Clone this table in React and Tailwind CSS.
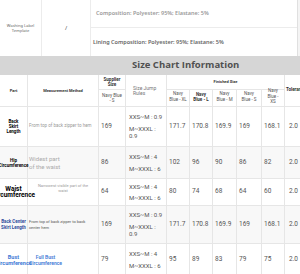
import React from 'react'

const GRID = 'grid grid-cols-[28px_71px_27px_41px_23px_23px_24px_25px_23px_20px]'

const rows = [
  {
    h: 'h-[40px]',
    bg: 'bg-white',
    part: <span className="text-[4.5px] font-bold leading-[5px] text-black">Back<br />Skirt<br />Length</span>,
    method: (
      <div className="flex h-full items-center pl-[1px] text-[4.5px] text-[#999]">From top of back zipper to hem</div>
    ),
    supplier: '169',
    jump: [['XXS~M : 0.9'], ['M~XXXL :', '0.9']],
    sizes: ['171.7', '170.8', '169.9', '169', '168.1'],
    tol: '2.0',
  },
  {
    h: 'h-[32px]',
    bg: 'bg-[#f8f8f8]',
    part: <span className="whitespace-nowrap text-[4.5px] font-bold leading-[5px] text-black">Hip<br />Circumference</span>,
    method: (
      <div className="flex h-full flex-col justify-center pl-[1px] text-[6px] leading-[7.5px] text-[#aaa]">
        <span>Widest part</span>
        <span>of the waist</span>
      </div>
    ),
    supplier: '86',
    jump: [['XXS~M : 4'], ['M~XXXL : 6']],
    sizes: ['102', '96', '90', '86', '82'],
    tol: '2.0',
  },
  {
    h: 'h-[27px]',
    bg: 'bg-white',
    part: <span className="whitespace-nowrap text-[6.5px] font-bold leading-[6.5px] text-black">Waist<br />Circumference</span>,
    method: (
      <div className="flex h-full flex-col items-center justify-start pt-[4px] text-center text-[4px] leading-[5px] text-[#999]">
        <span>Narrowest visible part of the</span>
        <span>waist</span>
      </div>
    ),
    supplier: '64',
    jump: [['XXS~M : 4'], ['M~XXXL : 6']],
    sizes: ['80', '74', '68', '64', '60'],
    tol: '2.0',
  },
  {
    h: 'h-[38px]',
    bg: 'bg-[#f8f8f8]',
    part: <span className="whitespace-nowrap text-[4.5px] font-bold leading-[6px] text-[#2e4b9b]">Back Center<br />Skirt Length</span>,
    method: (
      <div className="flex h-full flex-col justify-center pl-[1px] text-[4px] leading-[6px] text-[#555]">
        <span>From top of back zipper to back</span>
        <span>center hem</span>
      </div>
    ),
    supplier: '169',
    jump: [['XXS~M : 0.9'], ['M~XXXL :', '0.9']],
    sizes: ['171.7', '170.8', '169.9', '169', '168.1'],
    tol: '2.0',
  },
  {
    h: 'h-[32px]',
    bg: 'bg-white',
    part: <span className="whitespace-nowrap text-[5.5px] font-bold leading-[6px] text-[#3f7ad6]">Bust<br />Circumference</span>,
    method: (
      <div className="flex h-full items-center pl-[1px]">
        <div className="text-center text-[5px] font-semibold leading-[6px] text-[#3f7ad6]">
          Full Bust<br />Circumference
        </div>
      </div>
    ),
    supplier: '79',
    jump: [['XXS~M : 4'], ['M~XXXL : 6']],
    sizes: ['95', '89', '83', '79', '75'],
    tol: '2.0',
  },
]

const cell = 'border-r border-b border-[#e6e6e6]'
const num = 'flex items-center pl-[2px] text-[6.5px] text-[#555]'

const SizeRow = ({ row }) => (
  <div className={`${GRID} ${row.h} ${row.bg} font-['Roboto',sans-serif]`}>
    <div className={`${cell} flex flex-col items-center justify-center text-center`}>{row.part}</div>
    <div className={cell}>{row.method}</div>
    <div className={`${cell} ${num}`}>{row.supplier}</div>
    <div className={`${cell} flex flex-col justify-center gap-[4px] pl-[3px] text-[6px] leading-[7.5px] text-[#555]`}>
      {row.jump.map((lines, i) => (
        <div key={i}>
          {lines.map((l) => (
            <div key={l}>{l}</div>
          ))}
        </div>
      ))}
    </div>
    {row.sizes.map((s, i) => (
      <div key={i} className={`${cell} ${num}`}>{s}</div>
    ))}
    <div className={`${cell} ${num} pl-[4px]`}>{row.tol}</div>
  </div>
)

const App = () => {
  return (
    <div className="h-[274px] w-[300px] overflow-hidden bg-[#f4f4f4] font-['Noto_Sans',sans-serif]">
      {/* 상단: 세탁 라벨 / 혼용률 */}
      <div className="flex h-[56px] w-[298px] border-r border-[#e0e0e0] bg-white">
        <div className="flex w-[42px] items-center justify-center border-r border-[#ececec] text-center text-[4px] leading-[5px] text-[#666]">
          Washing Label<br />Template
        </div>
        <div className="flex w-[49px] items-center justify-center border-r border-[#ececec] text-[6px] text-[#555]">/</div>
        <div className="flex flex-1 flex-col">
          <div className="flex h-[28px] items-center border-b border-[#ececec] pl-[5px] text-[5.5px] font-semibold text-[#999]">
            Composition: Polyester: 95%; Elastane: 5%
          </div>
          <div className="flex h-[28px] items-center pl-[2px] text-[5.5px] font-semibold text-[#666]">
            Lining Composition: Polyester: 95%; Elastane: 5%
          </div>
        </div>
      </div>

      {/* 타이틀 */}
      <div className="flex h-[19px] items-center bg-[#d6d6d6] pl-[132px] font-['Open_Sans',sans-serif] text-[9.5px] font-bold text-[#505050]">
        Size Chart Information
      </div>

      {/* 헤더 */}
      <div className={`${GRID} grid-rows-[15px_17px] bg-white font-['Roboto',sans-serif]`}>
        <div className={`${cell} row-span-2 flex items-center justify-center text-[4px] font-bold text-[#333]`}>Part</div>
        <div className={`${cell} row-span-2 flex items-center justify-center text-[4px] font-bold text-[#333]`}>Measurement Method</div>
        <div className={`${cell} flex items-center justify-center text-center text-[4.5px] font-bold leading-[5px] text-[#333]`}>
          Supplier<br />Size
        </div>
        <div className={`${cell} row-span-2 flex items-center pl-[7px] text-[5px] leading-[5px] text-[#777]`}>
          Size Jump<br />Rules
        </div>
        <div className={`${cell} col-span-5 flex items-center justify-center text-[4px] font-bold text-[#333]`}>Finished Size</div>
        <div className={`${cell} row-span-2 flex items-center pl-[1px] text-[4.5px] font-bold text-[#333]`}>Tolerance</div>
        <div className={`${cell} flex items-center justify-center text-center text-[4.5px] leading-[5px] text-[#555]`}>
          Navy Blue<br />- S
        </div>
        <div className={`${cell} flex items-end justify-center pb-[4px] text-center text-[4.5px] leading-[5.5px] text-[#555]`}>
          Navy<br />Blue - XL
        </div>
        <div className={`${cell} flex items-start justify-center pt-[2px] text-center text-[4.5px] font-bold leading-[5px] text-[#333]`}>
          Navy<br />Blue - L
        </div>
        <div className={`${cell} flex items-end justify-center pb-[4px] text-center text-[4.5px] leading-[5.5px] text-[#555]`}>
          Navy<br />Blue - M
        </div>
        <div className={`${cell} flex items-end justify-center pb-[4px] text-center text-[4.5px] leading-[5.5px] text-[#555]`}>
          Navy<br />Blue - S
        </div>
        <div className={`${cell} flex items-start justify-center text-center text-[4.5px] leading-[5.5px] text-[#555]`}>
          <div className="-mt-[2px]">Navy<br />Blue -<br />XS</div>
        </div>
      </div>

      {/* 본문 */}
      {rows.map((row, i) => (
        <SizeRow key={i} row={row} />
      ))}
    </div>
  )
}

export default App
